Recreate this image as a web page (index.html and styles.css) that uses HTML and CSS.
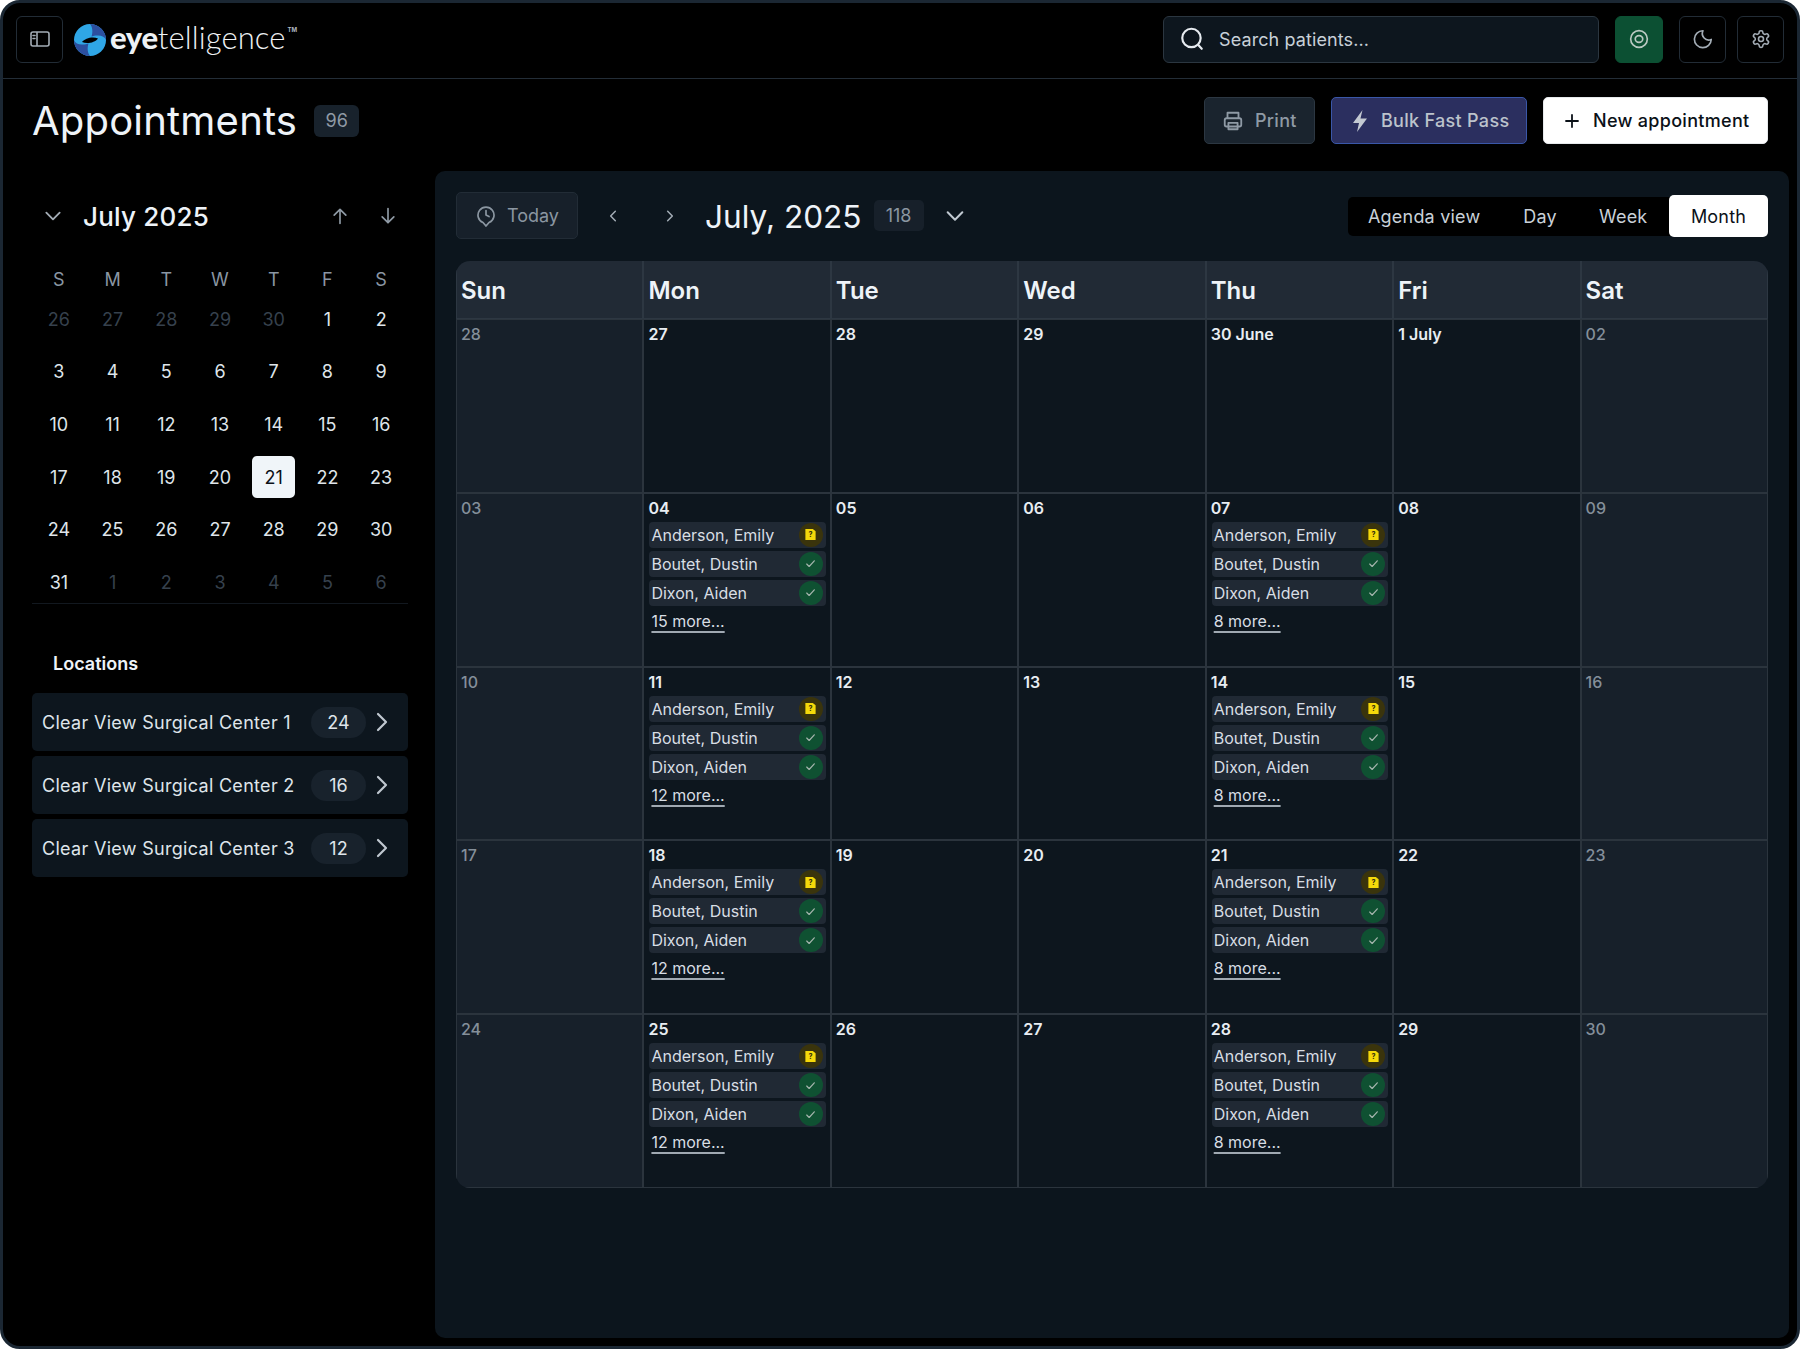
FILE: index.html
```html
<!DOCTYPE html>
<html lang="en">
<head>
    <meta charset="UTF-8">
    <meta name="viewport" content="width=device-width, initial-scale=1.0">
    <title>Appointments</title>
    <link rel="stylesheet" href="styles.css">
</head>
<body>

    <svg class="icon-sprite" xmlns="http://www.w3.org/2000/svg">
        <symbol id="i-check" viewBox="0 0 24 24"><path d="M5 13l4.500 4.500L19 7" fill="none" stroke="currentColor" stroke-width="2.200" stroke-linecap="round" stroke-linejoin="round"></path></symbol>
        <symbol id="i-doc" viewBox="0 0 14 14"><path d="M1.500 1h8l3 2.500V13h-11z" fill="#f5d90a"></path><text x="7" y="10" text-anchor="middle" font-size="7.500" font-weight="800" font-family="Inter" fill="#3a340c">?</text></symbol>
        <symbol id="i-right" viewBox="0 0 24 24"><path d="M8 4l8 8-8 8" fill="none" stroke="currentColor" stroke-width="2.200" stroke-linecap="round" stroke-linejoin="round"></path></symbol>
        <symbol id="i-down" viewBox="0 0 24 24"><path d="M4 8l8 8 8-8" fill="none" stroke="currentColor" stroke-width="2.200" stroke-linecap="round" stroke-linejoin="round"></path></symbol>
    </svg>

    <div class="app">

        <header class="topbar">
            <button class="icon-button">
                <svg width="20" height="16" viewBox="0 0 20 16" fill="none" stroke="#a3acb5" stroke-width="1.600"><rect x="1" y="1" width="18" height="14" rx="2"></rect><path d="M7 1v14"></path><path d="M3 4.500h2M3 7.500h2" stroke-linecap="round"></path></svg>
            </button>
            <div class="logo">
                <svg class="logo-mark" width="32" height="32" viewBox="0 0 32 32">
                    <circle cx="16" cy="16" r="16" fill="#2fa6e6"></circle>
                    <path d="M16 0A16 16 0 0 1 32 16C31 13 28 11.500 24 11.500 21 11.500 19 12 17.500 12.500 19 8 18.500 3 16 0z" fill="#2c4f9f"></path>
                    <path d="M16 32A16 16 0 0 1 0 16C1 19 4 20.500 8 20.500 11 20.500 13 20 14.500 19.500 13 24 13.500 29 16 32z" fill="#2c4f9f"></path>
                    <path d="M8 18C11 14 19 12 24 14.500 21 18.500 13 20.500 8 18z" fill="#000"></path>
                </svg>
                <div class="logo-word">
                    <span class="logo-bold">eye</span><span class="logo-light">telligence</span><span class="logo-tm">TM</span>
                </div>
            </div>
            <div class="search-box">
                <svg width="26" height="26" viewBox="0 0 24 24" fill="none" stroke="#e6ebf0" stroke-width="2" stroke-linecap="round"><circle cx="11.500" cy="11" r="8.500"></circle><path d="M17.800 17.500l3.200 3.500"></path></svg>
                <span>Search patients...</span>
            </div>
            <button class="icon-button eye-button">
                <svg width="20" height="20" viewBox="0 0 24 24" fill="none" stroke="#b9c8c1" stroke-width="2"><circle cx="12" cy="12" r="10"></circle><ellipse cx="12" cy="12" rx="4.500" ry="4"></ellipse></svg>
            </button>
            <button class="icon-button moon-button">
                <svg width="22" height="22" viewBox="0 0 24 24" fill="none" stroke="#a3acb5" stroke-width="1.800" stroke-linejoin="round"><path d="M12 3a7 7 0 0 0 9 9.500A9.200 9.200 0 1 1 12 3z"></path></svg>
            </button>
            <button class="icon-button gear-button">
                <svg width="20" height="20" viewBox="0 0 24 24" fill="none" stroke="#a3acb5" stroke-width="1.900" stroke-linecap="round" stroke-linejoin="round"><path d="M12.220 2h-.44a2 2 0 0 0-2 2v.18a2 2 0 0 1-1 1.730l-.43.25a2 2 0 0 1-2 0l-.15-.08a2 2 0 0 0-2.730.73l-.22.38a2 2 0 0 0 .73 2.730l.15.1a2 2 0 0 1 1 1.720v.51a2 2 0 0 1-1 1.740l-.15.09a2 2 0 0 0-.73 2.730l.22.38a2 2 0 0 0 2.730.73l.15-.08a2 2 0 0 1 2 0l.43.25a2 2 0 0 1 1 1.730V20a2 2 0 0 0 2 2h.44a2 2 0 0 0 2-2v-.18a2 2 0 0 1 1-1.730l.43-.25a2 2 0 0 1 2 0l.15.08a2 2 0 0 0 2.730-.73l.22-.39a2 2 0 0 0-.73-2.730l-.15-.08a2 2 0 0 1-1-1.740v-.5a2 2 0 0 1 1-1.740l.15-.09a2 2 0 0 0 .73-2.730l-.22-.38a2 2 0 0 0-2.730-.73l-.15.08a2 2 0 0 1-2 0l-.43-.25a2 2 0 0 1-1-1.730V4a2 2 0 0 0-2-2z"></path><circle cx="12" cy="12" r="3"></circle></svg>
            </button>
        </header>

        <div class="page-head">
            <h1>Appointments</h1>
            <span class="count-badge">96</span>
            <div class="page-actions">
                <button class="action print-button">
                    <svg width="22" height="22" viewBox="0 0 24 24" fill="none" stroke="#8f9aa5" stroke-width="2" stroke-linejoin="round"><path d="M6 9V3h12v6"></path><rect x="3" y="9" width="18" height="9" rx="2"></rect><path d="M7 14h10v7H7z"></path></svg>
                    Print
                </button>
                <button class="action bulk-button">
                    <svg width="20" height="24" viewBox="0 0 20 24" fill="#c3c9d2"><path d="M12.500 1L3 14h6l-2 9 10-13.500h-6.500z"></path></svg>
                    Bulk Fast Pass
                </button>
                <button class="action new-button">
                    <svg width="18" height="18" viewBox="0 0 18 18" stroke="#0b1118" stroke-width="1.800" stroke-linecap="round"><path d="M9 3v12M3 9h12"></path></svg>
                    New appointment
                </button>
            </div>
        </div>

        <div class="content">
            <aside class="sidebar">
                <div class="mini-head">
                    <svg class="mini-toggle" width="20" height="20"><use href="#i-down"></use></svg>
                    <span class="mini-title">July 2025</span>
                    <svg class="mini-arrow" width="20" height="20" viewBox="0 0 24 24" fill="none" stroke="currentColor" stroke-width="2" stroke-linecap="round" stroke-linejoin="round"><path d="M12 21V4M5 11l7-7 7 7"></path></svg>
                    <svg class="mini-arrow" width="20" height="20" viewBox="0 0 24 24" fill="none" stroke="currentColor" stroke-width="2" stroke-linecap="round" stroke-linejoin="round"><path d="M12 3v17M5 13l7 7 7-7"></path></svg>
                </div>
                <div class="mini-weekdays">
                    <span>S</span><span>M</span><span>T</span><span>W</span><span>T</span><span>F</span><span>S</span>
                </div>
                <div class="mini-days">
                    <span class="faded">26</span><span class="faded">27</span><span class="faded">28</span><span class="faded">29</span><span class="faded">30</span><span>1</span><span>2</span>
                    <span>3</span><span>4</span><span>5</span><span>6</span><span>7</span><span>8</span><span>9</span>
                    <span>10</span><span>11</span><span>12</span><span>13</span><span>14</span><span>15</span><span>16</span>
                    <span>17</span><span>18</span><span>19</span><span>20</span><span class="selected">21</span><span>22</span><span>23</span>
                    <span>24</span><span>25</span><span>26</span><span>27</span><span>28</span><span>29</span><span>30</span>
                    <span>31</span><span class="faded">1</span><span class="faded">2</span><span class="faded">3</span><span class="faded">4</span><span class="faded">5</span><span class="faded">6</span>
                </div>
                <h2 class="locations-title">Locations</h2>
                <div class="location-list">
                    <div class="location"><span class="location-name">Clear View Surgical Center 1</span><span class="location-count">24</span><svg width="24" height="24"><use href="#i-right"></use></svg></div>
                    <div class="location"><span class="location-name">Clear View Surgical Center 2</span><span class="location-count">16</span><svg width="24" height="24"><use href="#i-right"></use></svg></div>
                    <div class="location"><span class="location-name">Clear View Surgical Center 3</span><span class="location-count">12</span><svg width="24" height="24"><use href="#i-right"></use></svg></div>
                </div>
            </aside>

            <main class="panel">
                <div class="toolbar">
                    <button class="today-button">
                        <svg width="20" height="22" viewBox="0 0 20 22" fill="none" stroke="#8b96a1" stroke-width="1.700" stroke-linecap="round" stroke-linejoin="round"><path d="M10 21l-3-3.500a8 8 0 1 1 6 0z"></path><path d="M10 5.500V10l3 1.500"></path></svg>
                        Today
                    </button>
                    <button class="nav-button"><svg width="14" height="14" viewBox="0 0 24 24" fill="none" stroke="#a3acb5" stroke-width="2.600" stroke-linecap="round" stroke-linejoin="round"><path d="M16 4l-8 8 8 8"></path></svg></button>
                    <button class="nav-button"><svg width="14" height="14" viewBox="0 0 24 24" fill="none" stroke="#a3acb5" stroke-width="2.600" stroke-linecap="round" stroke-linejoin="round"><path d="M8 4l8 8-8 8"></path></svg></button>
                    <span class="month-title">July, 2025</span>
                    <span class="month-count">118</span>
                    <svg class="month-toggle" width="22" height="22"><use href="#i-down"></use></svg>
                    <div class="view-switch">
                        <span class="view-item agenda">Agenda view</span>
                        <span class="view-item day">Day</span>
                        <span class="view-item week">Week</span>
                        <span class="view-item month">Month</span>
                    </div>
                </div>

                <div class="calendar">
                    <div class="head-cell">Sun</div><div class="head-cell">Mon</div><div class="head-cell">Tue</div><div class="head-cell">Wed</div><div class="head-cell">Thu</div><div class="head-cell">Fri</div><div class="head-cell">Sat</div>

                    <div class="cell weekend"><div class="date">28</div></div>
                    <div class="cell"><div class="date">27</div></div>
                    <div class="cell"><div class="date">28</div></div>
                    <div class="cell"><div class="date">29</div></div>
                    <div class="cell"><div class="date">30 June</div></div>
                    <div class="cell"><div class="date">1 July</div></div>
                    <div class="cell weekend"><div class="date">02</div></div>

                    <div class="cell weekend"><div class="date">03</div></div>
                    <div class="cell"><div class="date">04</div>
                        <div class="chip">Anderson, Emily<span class="status pending"><svg width="13" height="13"><use href="#i-doc"></use></svg></span></div>
                        <div class="chip">Boutet, Dustin<span class="status done"><svg width="13" height="13"><use href="#i-check"></use></svg></span></div>
                        <div class="chip">Dixon, Aiden<span class="status done"><svg width="13" height="13"><use href="#i-check"></use></svg></span></div>
                        <a class="more">15 more...</a>
                    </div>
                    <div class="cell"><div class="date">05</div></div>
                    <div class="cell"><div class="date">06</div></div>
                    <div class="cell"><div class="date">07</div>
                        <div class="chip">Anderson, Emily<span class="status pending"><svg width="13" height="13"><use href="#i-doc"></use></svg></span></div>
                        <div class="chip">Boutet, Dustin<span class="status done"><svg width="13" height="13"><use href="#i-check"></use></svg></span></div>
                        <div class="chip">Dixon, Aiden<span class="status done"><svg width="13" height="13"><use href="#i-check"></use></svg></span></div>
                        <a class="more">8 more...</a>
                    </div>
                    <div class="cell"><div class="date">08</div></div>
                    <div class="cell weekend"><div class="date">09</div></div>

                    <div class="cell weekend"><div class="date">10</div></div>
                    <div class="cell"><div class="date">11</div>
                        <div class="chip">Anderson, Emily<span class="status pending"><svg width="13" height="13"><use href="#i-doc"></use></svg></span></div>
                        <div class="chip">Boutet, Dustin<span class="status done"><svg width="13" height="13"><use href="#i-check"></use></svg></span></div>
                        <div class="chip">Dixon, Aiden<span class="status done"><svg width="13" height="13"><use href="#i-check"></use></svg></span></div>
                        <a class="more">12 more...</a>
                    </div>
                    <div class="cell"><div class="date">12</div></div>
                    <div class="cell"><div class="date">13</div></div>
                    <div class="cell"><div class="date">14</div>
                        <div class="chip">Anderson, Emily<span class="status pending"><svg width="13" height="13"><use href="#i-doc"></use></svg></span></div>
                        <div class="chip">Boutet, Dustin<span class="status done"><svg width="13" height="13"><use href="#i-check"></use></svg></span></div>
                        <div class="chip">Dixon, Aiden<span class="status done"><svg width="13" height="13"><use href="#i-check"></use></svg></span></div>
                        <a class="more">8 more...</a>
                    </div>
                    <div class="cell"><div class="date">15</div></div>
                    <div class="cell weekend"><div class="date">16</div></div>

                    <div class="cell weekend"><div class="date">17</div></div>
                    <div class="cell"><div class="date">18</div>
                        <div class="chip">Anderson, Emily<span class="status pending"><svg width="13" height="13"><use href="#i-doc"></use></svg></span></div>
                        <div class="chip">Boutet, Dustin<span class="status done"><svg width="13" height="13"><use href="#i-check"></use></svg></span></div>
                        <div class="chip">Dixon, Aiden<span class="status done"><svg width="13" height="13"><use href="#i-check"></use></svg></span></div>
                        <a class="more">12 more...</a>
                    </div>
                    <div class="cell"><div class="date">19</div></div>
                    <div class="cell"><div class="date">20</div></div>
                    <div class="cell"><div class="date">21</div>
                        <div class="chip">Anderson, Emily<span class="status pending"><svg width="13" height="13"><use href="#i-doc"></use></svg></span></div>
                        <div class="chip">Boutet, Dustin<span class="status done"><svg width="13" height="13"><use href="#i-check"></use></svg></span></div>
                        <div class="chip">Dixon, Aiden<span class="status done"><svg width="13" height="13"><use href="#i-check"></use></svg></span></div>
                        <a class="more">8 more...</a>
                    </div>
                    <div class="cell"><div class="date">22</div></div>
                    <div class="cell weekend"><div class="date">23</div></div>

                    <div class="cell weekend"><div class="date">24</div></div>
                    <div class="cell"><div class="date">25</div>
                        <div class="chip">Anderson, Emily<span class="status pending"><svg width="13" height="13"><use href="#i-doc"></use></svg></span></div>
                        <div class="chip">Boutet, Dustin<span class="status done"><svg width="13" height="13"><use href="#i-check"></use></svg></span></div>
                        <div class="chip">Dixon, Aiden<span class="status done"><svg width="13" height="13"><use href="#i-check"></use></svg></span></div>
                        <a class="more">12 more...</a>
                    </div>
                    <div class="cell"><div class="date">26</div></div>
                    <div class="cell"><div class="date">27</div></div>
                    <div class="cell"><div class="date">28</div>
                        <div class="chip">Anderson, Emily<span class="status pending"><svg width="13" height="13"><use href="#i-doc"></use></svg></span></div>
                        <div class="chip">Boutet, Dustin<span class="status done"><svg width="13" height="13"><use href="#i-check"></use></svg></span></div>
                        <div class="chip">Dixon, Aiden<span class="status done"><svg width="13" height="13"><use href="#i-check"></use></svg></span></div>
                        <a class="more">8 more...</a>
                    </div>
                    <div class="cell"><div class="date">29</div></div>
                    <div class="cell weekend"><div class="date">30</div></div>
                </div>
            </main>
        </div>
    </div>

</body>
</html>
```

FILE: styles.css
```css
* {
    box-sizing: border-box;
}

body {
    margin: 0;
    background-color: #ffffff;
    font-family: Inter, "Liberation Sans", sans-serif;
    font-size: 18px;
    color: #dfe5ea;
}

button {
    font-family: inherit;
    font-size: 18px;
    cursor: pointer;
}

.icon-sprite {
    display: none;
}

.app {
    height: 1349px;
    display: flex;
    flex-direction: column;
    background-color: #000;
    border: 3px solid #1b2733;
    border-radius: 20px;
    overflow: hidden;
}

/* Top bar */
.topbar {
    height: 76px;
    flex-shrink: 0;
    display: flex;
    align-items: center;
    padding: 0 13px 3px 13px;
    border-bottom: 1px solid #232d37;
}

.icon-button {
    width: 47px;
    height: 47px;
    display: flex;
    align-items: center;
    justify-content: center;
    padding: 0;
    background: none;
    border: 1px solid #222c36;
    border-radius: 6px;
}

.logo {
    display: flex;
    align-items: center;
    margin: 2px 0 0 11px;
}

.logo-mark {
    margin-right: 4px;
}

.logo-word {
    display: flex;
    align-items: baseline;
    margin-bottom: 6px;
    color: #eef1f4;
    font-family: Lato, sans-serif;
    font-size: 31px;
    line-height: 40px;
}

.logo-bold {
    font-weight: 900;
    letter-spacing: -0.3px;
}

.logo-light {
    font-weight: 300;
    letter-spacing: 0.1px;
}

.logo-tm {
    align-self: flex-start;
    margin: 9px 0 0 2px;
    font-family: Inter, sans-serif;
    font-size: 6px;
    font-weight: 700;
    line-height: 8px;
    color: #b0b8c0;
}

.search-box {
    width: 436px;
    height: 47px;
    margin-left: auto;
    display: flex;
    align-items: center;
    gap: 14px;
    padding: 0 15px;
    background-color: #0d161e;
    border: 1px solid #2b3640;
    border-radius: 6px;
    color: #c8d0d8;
    letter-spacing: 0.1px;
}

.eye-button {
    width: 48px;
    margin-left: 16px;
    background-color: #0c5033;
    border-color: #0c5033;
}

.moon-button {
    width: 47px;
    margin-left: 16px;
}

.gear-button {
    margin-left: 11px;
}

/* Page heading */
.page-head {
    flex-shrink: 0;
    display: flex;
    align-items: center;
    height: 47px;
    margin-top: 18px;
    padding: 0 29px 0 29px;
}

.page-head h1 {
    margin: 0;
    font-size: 40px;
    font-weight: 400;
    letter-spacing: 0.2px;
    color: #eef3f8;
}

.count-badge {
    width: 45px;
    height: 32px;
    margin-left: 17px;
    display: flex;
    align-items: center;
    justify-content: center;
    background-color: #18222c;
    border-radius: 6px;
    color: #8f9aa5;
    font-size: 18px;
}

.page-actions {
    margin-left: auto;
    display: flex;
    gap: 16px;
}

.action {
    height: 47px;
    display: flex;
    align-items: center;
    border-radius: 5px;
    font-weight: 500;
    letter-spacing: 0.3px;
}

.print-button {
    width: 111px;
    gap: 11px;
    padding: 0 0 0 17px;
    background-color: #1a242e;
    border: 1px solid #2c3742;
    color: #8f9aa5;
}

.bulk-button {
    width: 196px;
    gap: 11px;
    padding: 0 0 0 18px;
    background-color: #2b2f5f;
    border: 1px solid #3a57a8;
    color: #bcc3cc;
}

.new-button {
    width: 225px;
    gap: 12px;
    padding: 0 0 0 19px;
    background-color: #fff;
    border: 1px solid #e6e9ec;
    color: #0b1118;
}

/* Body of the page */
.content {
    flex: 1;
    display: flex;
    min-height: 0;
    margin-top: 27px;
    padding: 0 8px 8px 29px;
    gap: 27px;
}

.sidebar {
    width: 376px;
    flex-shrink: 0;
    padding-top: 24px;
}

.mini-head {
    height: 42px;
    display: flex;
    align-items: center;
    gap: 28px;
    padding-left: 11px;
}

.mini-toggle {
    color: #a3acb5;
    margin-right: -8px;
}

.mini-title {
    flex: 1;
    font-size: 26px;
    font-weight: 500;
    letter-spacing: 0.2px;
    color: #eef3f8;
}

.mini-arrow {
    color: #8f9aa5;
}

.mini-arrow:last-child {
    margin-right: 10px;
}

.mini-weekdays {
    display: grid;
    grid-template-columns: repeat(7, 1fr);
    height: 24px;
    margin-top: 31px;
    text-align: center;
    color: #8a96a3;
    line-height: 24px;
}

.mini-days {
    display: grid;
    grid-template-columns: repeat(7, 1fr);
    grid-auto-rows: 42px;
    row-gap: 10.700px;
    margin-top: 6px;
    border-bottom: 1px solid #12181f;
}

.mini-days span {
    display: flex;
    align-items: center;
    justify-content: center;
    color: #dfe5ea;
}

.mini-days .faded {
    color: #36414d;
}

.mini-days .selected {
    width: 43px;
    justify-self: center;
    background-color: #f0f5f9;
    border-radius: 5px;
    color: #0b1118;
}

.locations-title {
    margin: 49px 0 0 21px;
    font-size: 18px;
    line-height: 22px;
    font-weight: 600;
    color: #eef3f8;
}

.location-list {
    display: flex;
    flex-direction: column;
    gap: 5px;
    margin-top: 18px;
}

.location {
    height: 58px;
    display: flex;
    align-items: center;
    padding: 0 14px 0 10px;
    background-color: #0d161e;
    border-radius: 5px;
    color: #dfe5ea;
}

.location-name {
    flex: 1;
    letter-spacing: 0.3px;
}

.location-count {
    width: 55px;
    height: 31px;
    display: flex;
    align-items: center;
    justify-content: center;
    margin-right: 4px;
    background-color: #18222c;
    border-radius: 16px;
}

.location svg {
    color: #c0c8d0;
}

/* Calendar panel */
.panel {
    flex: 1;
    min-width: 0;
    padding: 21px;
    background-color: #0c151d;
    border-radius: 10px;
}

.toolbar {
    height: 47px;
    display: flex;
    align-items: center;
}

.today-button {
    width: 122px;
    height: 47px;
    display: flex;
    align-items: center;
    gap: 11px;
    padding: 0 0 0 19px;
    background-color: #17202a;
    border: 1px solid #222c36;
    border-radius: 5px;
    color: #8b96a1;
}

.nav-button {
    width: 14px;
    height: 14px;
    padding: 0;
    background: none;
    border: none;
    margin-left: 28px;
}

.nav-button svg {
    display: block;
}

.nav-button + .nav-button {
    margin-left: 43px;
}

.month-title {
    margin-left: 28px;
    padding-top: 2px;
    font-size: 31.600px;
    font-weight: 400;
    color: #eef3f8;
}

.month-count {
    width: 50px;
    height: 31px;
    margin-left: 12px;
    display: flex;
    align-items: center;
    justify-content: center;
    background-color: #17202a;
    border-radius: 5px;
    color: #8b96a1;
}

.month-toggle {
    margin-left: 20px;
    color: #c0c8d0;
}

.view-switch {
    margin-left: auto;
    margin-top: 1px;
    width: 420px;
    height: 39px;
    position: relative;
    display: flex;
    align-items: center;
    background-color: #000;
    border-radius: 5px;
    color: #c9d1d9;
    letter-spacing: 0.2px;
}

.view-item {
    text-align: center;
}

.agenda {
    margin-left: 20px;
}

.day {
    margin-left: 43px;
}

.week {
    margin-left: 42px;
}

.month {
    position: absolute;
    right: 0;
    top: -2px;
    width: 99px;
    height: 42px;
    line-height: 43px;
    background-color: #fff;
    border-radius: 5px;
    color: #0b1118;
}

/* Every cell draws half of each grid line, so the lines sit on the tracks */
.calendar {
    height: 927px;
    margin-top: 22px;
    display: grid;
    grid-template-columns: repeat(7, 1fr);
    grid-template-rows: 58px repeat(5, 1fr);
    border-radius: 14px;
    overflow: hidden;
}

.head-cell {
    display: flex;
    align-items: center;
    padding: 2px 0 0 4px;
    background-color: #212a35;
    border: 1px solid #2d3742;
    border-top: none;
    color: #eef3f8;
    font-size: 24px;
    font-weight: 600;
}

.cell {
    padding: 4px 4px 0 5px;
    border: 1px solid #2b343d;
    background-color: #0d161e;
}

.cell.weekend {
    background-color: #17202a;
}

.date {
    height: 20px;
    margin: 0 0 4px -1px;
    font-size: 16px;
    line-height: 20px;
    font-weight: 600;
    color: #e8edf2;
}

.weekend .date {
    font-weight: 500;
    color: #848f9a;
}

.chip {
    height: 26px;
    margin-bottom: 3px;
    display: flex;
    align-items: center;
    justify-content: space-between;
    padding: 0 3px 0 2px;
    background-color: #202934;
    border-radius: 4px;
    font-size: 16px;
    color: #d8dee4;
}

.status {
    width: 24px;
    height: 24px;
    display: flex;
    align-items: center;
    justify-content: center;
    border-radius: 50%;
}

.status.pending {
    background-color: #3a340c;
}

.status.done {
    background-color: #0f5132;
    color: #a5b5ad;
}

.more {
    display: inline-block;
    margin-left: 2px;
    font-size: 16px;
    line-height: 24px;
    color: #d8dee4;
    text-decoration: underline;
    text-decoration-color: #a0a9b2;
    text-decoration-thickness: 2px;
    text-underline-offset: 4px;
}
```
